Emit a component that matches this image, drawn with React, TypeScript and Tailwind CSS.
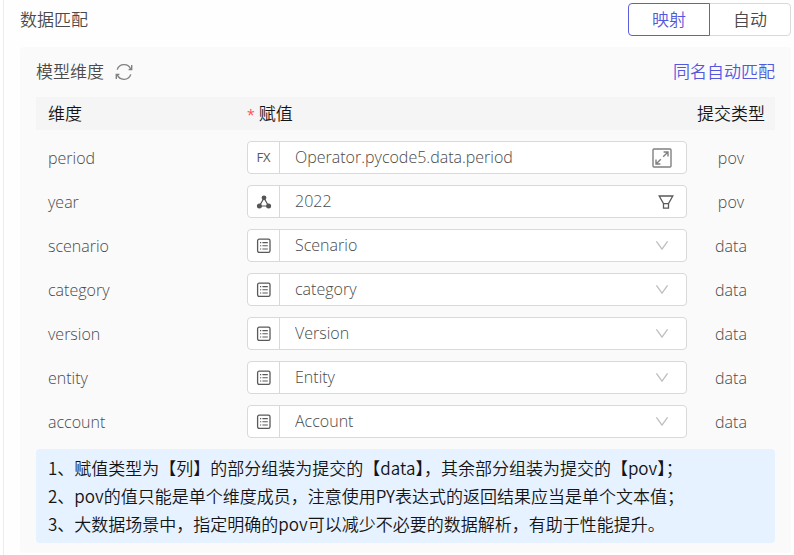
import React, { useState } from 'react';

const rows = [
	{ name: 'period', kind: 'fx', value: 'Operator.pycode5.data.period', submit: 'pov' },
	{ name: 'year', kind: 'member', value: '2022', submit: 'pov' },
	{ name: 'scenario', kind: 'column', value: 'Scenario', submit: 'data' },
	{ name: 'category', kind: 'column', value: 'category', submit: 'data' },
	{ name: 'version', kind: 'column', value: 'Version', submit: 'data' },
	{ name: 'entity', kind: 'column', value: 'Entity', submit: 'data' },
	{ name: 'account', kind: 'column', value: 'Account', submit: 'data' },
];

const columns = ['Scenario', 'category', 'Version', 'Entity', 'Account'];

const notes = [
	'1、赋值类型为【列】的部分组装为提交的【data】，其余部分组装为提交的【pov】；',
	'2、pov的值只能是单个维度成员，注意使用PY表达式的返回结果应当是单个文本值；',
	'3、大数据场景中，指定明确的pov可以减少不必要的数据解析，有助于性能提升。',
];

const RefreshIcon = () => (
	<svg width="18" height="18" viewBox="0 0 18 18" fill="none" stroke="#808080" strokeWidth="1.4">
		<path d="M2.2 6.6A7.2 7.2 0 0 1 15.8 6.4M16.7 2V6.6H13.6" />
		<path d="M15.8 11.4A7.2 7.2 0 0 1 2.2 11.6M1.3 16V11.4H4.4" />
	</svg>
);

const MemberIcon = () => (
	<svg width="16" height="16" viewBox="0 0 16 16" fill="#555" stroke="#555">
		<path d="M8 4L3.5 12H12.5Z" fill="none" strokeWidth="1.2" />
		<circle cx="8" cy="3.8" r="2.4" stroke="none" />
		<circle cx="3.4" cy="12" r="2.5" stroke="none" />
		<circle cx="12.6" cy="12" r="2.5" stroke="none" />
	</svg>
);

const ColumnIcon = () => (
	<svg width="16" height="16" viewBox="0 0 16 16" fill="none" stroke="#595959">
		<rect x="1.6" y="1.2" width="12.4" height="13.2" rx="1.6" strokeWidth="1.3" />
		<path d="M4 4.6H5.2M4 7.8H5.2M4 11H5.2M6.4 4.6H11.8M6.4 7.8H11.8M6.4 11H11.8" strokeWidth="1.1" />
	</svg>
);

const ExpandIcon = () => (
	<svg width="20" height="20" viewBox="0 0 20 20" fill="none" stroke="#808080" strokeWidth="1.4">
		<rect x="1" y="1" width="18" height="18" rx="1" />
		<path d="M11.2 8.8L16 4M11.6 4H16V8.4M8.8 11.2L4 16M4 11.6V16H8.4" />
	</svg>
);

const FilterIcon = () => (
	<svg width="16" height="16" viewBox="0 0 16 16" fill="none" stroke="#595959" strokeWidth="1.3">
		<path d="M1.2 2H14.8L10.5 9.6H5.5ZM5.5 9.6V14.2H10.5V9.6" />
	</svg>
);

const ArrowIcon = () => (
	<svg className="pointer-events-none -ml-8 mr-[17px] shrink-0" width="14" height="14" viewBox="0 0 14 14" fill="none" stroke="#bfbfbf" strokeWidth="1.3">
		<path d="M1.4 2.4L7 10.2L12.6 2.4" />
	</svg>
);

const TypeIcon = ({ kind }) => {
	if (kind === 'fx') {
		return <span className="text-[13px] font-medium text-[#595959]">FX</span>;
	}
	if (kind === 'member') {
		return <MemberIcon />;
	}
	return <ColumnIcon />;
};

const ValueField = ({ name, kind, value }) => {
	const [current, setCurrent] = useState(value);
	const id = `field-${name}`;

	return (
		<div className="flex h-[33px] items-stretch overflow-hidden rounded border border-[#d9d9d9] bg-white">
			<button type="button" aria-label={`${name} 类型`} className="flex w-8 shrink-0 items-center justify-center border-r border-[#d9d9d9]">
				<TypeIcon kind={kind} />
			</button>
			<div className="flex min-w-0 flex-1 items-center">
				{kind === 'column' ? (
					<>
						<select
							id={id}
							value={current}
							onChange={(e) => setCurrent(e.target.value)}
							className="h-full w-full min-w-0 flex-1 appearance-none bg-transparent pb-px pl-[15px] pr-8 outline-none"
						>
							{columns.map((column) => (
								<option key={column}>{column}</option>
							))}
						</select>
						<ArrowIcon />
					</>
				) : (
					<>
						<input
							id={id}
							value={current}
							onChange={(e) => setCurrent(e.target.value)}
							className="h-full w-full min-w-0 flex-1 bg-transparent pb-px pl-[15px] outline-none"
						/>
						<button type="button" aria-label={kind === 'fx' ? '展开' : '筛选'} className={kind === 'fx' ? 'mr-[14px]' : 'mr-3'}>
							{kind === 'fx' ? <ExpandIcon /> : <FilterIcon />}
						</button>
					</>
				)}
			</div>
		</div>
	);
};

const ModeSwitch = () => {
	const [mode, setMode] = useState('映射');

	return (
		<div className="flex h-[33px]">
			{['映射', '自动'].map((item, i) => (
				<button
					key={item}
					type="button"
					aria-pressed={mode === item}
					onClick={() => setMode(item)}
					className={`w-[82px] border bg-white ${i === 0 ? 'rounded-l' : '-ml-px rounded-r'} ${
						mode === item ? 'z-10 border-[#5b5fdc] text-[#5357e0]' : 'border-[#d9d9d9]'
					}`}
				>
					{item}
				</button>
			))}
		</div>
	);
};

const App = () => {
	return (
		<div className="ml-[3px] min-h-screen border-l border-[#ececec] bg-[#fefefe] pl-4 pr-[3px] pt-[3px] font-['Open_Sans','Noto_Sans_CJK_SC',sans-serif] text-[17px] font-[350] leading-7 text-[#4a4a4a]">
			<div className="mb-[11px] flex items-center justify-between">
				<h1>数据匹配</h1>
				<ModeSwitch />
			</div>
			<section className="rounded bg-[#fafafa] px-4 pb-[10px]">
				<div className="flex h-[50px] items-center justify-between">
					<div className="flex items-center gap-[11px]">
						<h2>模型维度</h2>
						<button type="button" aria-label="刷新">
							<RefreshIcon />
						</button>
					</div>
					<button type="button" className="text-[#5357e0]">
						同名自动匹配
					</button>
				</div>
				<table className="w-full table-fixed">
					<thead className="bg-[#f5f5f5] text-[#141414]">
						<tr className="h-[33px]">
							<th className="w-[211px] pl-3 text-left font-[350]">维度</th>
							<th className="text-left font-[350]">
								<span className="mr-1 text-sm font-normal text-[#ff4d4f]">*</span>赋值
							</th>
							<th className="w-[88px] font-[350]">提交类型</th>
						</tr>
					</thead>
					<tbody className="text-base">
						{rows.map((row) => (
							<tr key={row.name}>
								<td className="pl-3 pt-[11px]">
									<label htmlFor={`field-${row.name}`}>{row.name}</label>
								</td>
								<td className="pt-[11px]">
									<ValueField name={row.name} kind={row.kind} value={row.value} />
								</td>
								<td className="pt-[11px] text-center">{row.submit}</td>
							</tr>
						))}
					</tbody>
				</table>
				<div className="mt-[11px] rounded bg-[#e6f2ff] px-3 py-[5px] font-['Noto_Sans_CJK_SC',sans-serif] text-[#141414]">
					{notes.map((note) => (
						<p key={note}>{note}</p>
					))}
				</div>
			</section>
		</div>
	);
};

export default App;
